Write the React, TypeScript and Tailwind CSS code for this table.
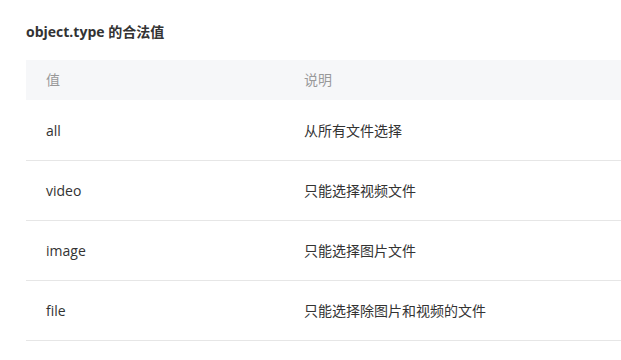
export default function App() {
  const rows = [
    ["all", "从所有文件选择"],
    ["video", "只能选择视频文件"],
    ["image", "只能选择图片文件"],
    ["file", "只能选择除图片和视频的文件"],
  ];
  return (
    <div
      className="w-[621px] h-[360px] bg-white pl-[26px] overflow-hidden"
      style={{ fontFamily: '"Open Sans", "Noto Sans CJK SC", sans-serif' }}
    >
      <div className="pt-[22px] h-[60px] text-[14px] leading-[20px] font-bold text-[#333]">
        object.type 的合法值
      </div>
      <div className="w-[700px] text-[14px] leading-[20px]">
        <div className="flex h-[41px] items-center bg-[#f6f7f9] border-b border-white text-[#999]">
          <div className="w-[258px] pl-[20px]">值</div>
          <div className="pl-[20px]">说明</div>
        </div>
        {rows.map(([a, b]) => (
          <div key={a} className="flex h-[60px] items-center border-b border-[#e6e6e6] text-[#333]">
            <div className="w-[258px] pl-[20px]">{a}</div>
            <div className="pl-[20px]">{b}</div>
          </div>
        ))}
      </div>
    </div>
  );
}
